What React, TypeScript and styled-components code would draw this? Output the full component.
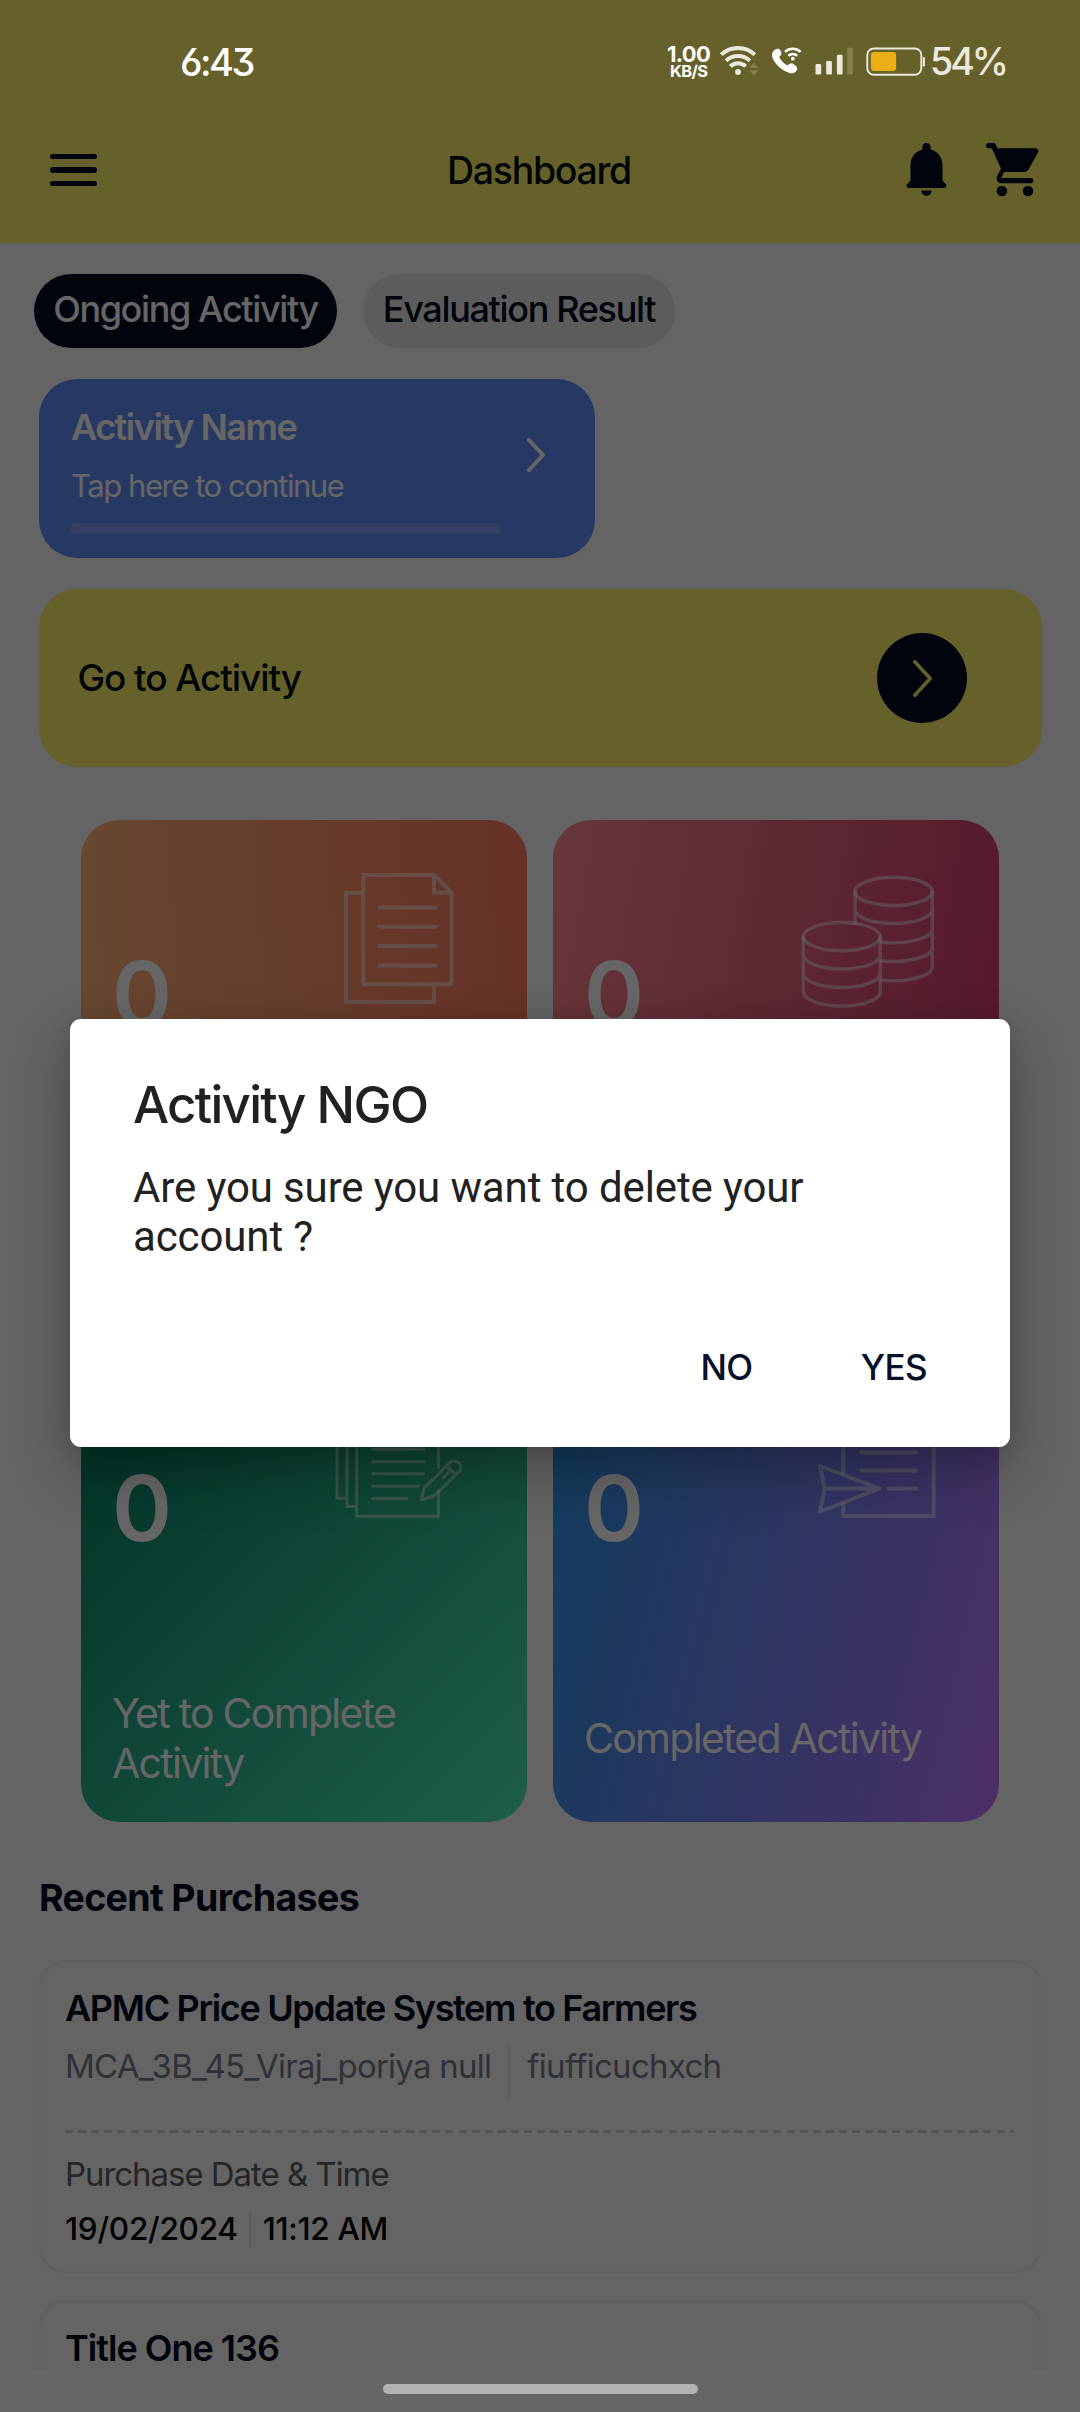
import React from 'react';
import styled, { createGlobalStyle } from 'styled-components';

const GlobalStyle = createGlobalStyle`
  *, *::before, *::after { box-sizing: border-box; }
  html, body { margin: 0; padding: 0; }
  body { font-family: Inter, "Liberation Sans", sans-serif; background: #666; }
`;

const Screen = styled.div`
  position: relative;
  width: 1080px;
  height: 2412px;
  overflow: hidden;
  display: flex;
  flex-direction: column;
  background: #fafafa;
`;

type TextProps = { $size: number; $line: number; $track?: number; $weight?: number; $color?: string };
const Text = styled.span<TextProps>`
  font-size: ${(p) => p.$size}px;
  line-height: ${(p) => p.$line}px;
  letter-spacing: ${(p) => p.$track ?? 0}px;
  font-weight: ${(p) => p.$weight ?? 400};
  color: ${(p) => p.$color ?? '#fff'};
  white-space: nowrap;
`;

/* ---------- app bar ---------- */

const AppBar = styled.header`
  flex: none;
  height: 243px;
  padding: 97px 41px 0 50px;
  display: grid;
  grid-template-columns: 190px 1fr 190px;
  align-items: center;
  background: #fff26b;
`;

const MenuButton = styled.div`
  width: 47px;
  display: flex;
  flex-direction: column;
  gap: 8px;
`;

const MenuLine = styled.i`
  height: 5.3px;
  border-radius: 3px;
  background: #020a20;
`;

const BarTitle = styled.div`
  display: flex;
  justify-content: center;
  padding: 2px 11px 0 0;
`;

const BarActions = styled.div`
  display: flex;
  justify-content: flex-end;
  gap: 39px;
`;

/* ---------- tabs ---------- */

const Tabs = styled.nav`
  flex: none;
  display: flex;
  gap: 26px;
  padding: 31px 34px 0;
`;

const Tab = styled.div<{ $active?: boolean; $width: number }>`
  width: ${(p) => p.$width}px;
  height: 74px;
  padding-bottom: 4px;
  border-radius: 37px;
  display: flex;
  align-items: center;
  justify-content: center;
  background: ${(p) => (p.$active ? '#020a20' : '#e6e6e6')};
`;

/* ---------- activity cards ---------- */

const ActivityCard = styled.section`
  flex: none;
  width: 556px;
  height: 179px;
  margin: 31px 0 0 39px;
  padding: 24px 50px 0 32px;
  border-radius: 38px;
  display: flex;
  justify-content: space-between;
  background: #5f8ff7;
`;

const ActivityText = styled.div`
  width: 430px;
  display: flex;
  flex-direction: column;
`;

const ProgressTrack = styled.div`
  height: 11px;
  margin-top: 2px;
  border-radius: 5px;
  background: #82a0f7;
`;

const ChevronSlot = styled.div`
  padding-top: 35px;
  line-height: 0;
`;

const GoCard = styled.section`
  flex: none;
  width: 1003px;
  height: 178px;
  margin: 31px 0 0 39px;
  padding: 0 75px 0 38.5px;
  border-radius: 38px;
  display: flex;
  align-items: center;
  justify-content: space-between;
  background: #fff26b;
`;

const GoButton = styled.div`
  width: 90px;
  height: 90px;
  border-radius: 50%;
  display: flex;
  align-items: center;
  justify-content: center;
  background: #020a20;
`;

/* ---------- stat tiles ---------- */

const Tiles = styled.section`
  flex: none;
  margin: 53px 81px 0;
  display: grid;
  grid-template-columns: 446px 446px;
  grid-auto-rows: 488px;
  gap: 26px;
`;

const Tile = styled.article<{ $fill: string }>`
  border-radius: 38px;
  background: ${(p) => p.$fill};
`;

const TileHead = styled.div`
  height: 320px;
  padding: 50px 60px 0 31px;
  display: flex;
  justify-content: space-between;
`;

const TileCount = styled.div`
  padding-top: 74px;
`;

const TileLabel = styled.div`
  height: 168px;
  padding-left: 31px;
  display: flex;
  flex-direction: column;
  justify-content: center;
`;

const TileIcon = styled.svg<{ $stroke: number }>`
  width: 140px;
  height: 140px;
  fill: none;
  stroke: rgba(255, 255, 255, 0.48);
  stroke-width: ${(p) => p.$stroke};
  stroke-linecap: round;
  stroke-linejoin: round;
`;

/* ---------- purchases ---------- */

const SectionTitle = styled.h2`
  flex: none;
  margin: 50px 0 0 39px;
  height: 52px;
  display: flex;
`;

const Purchase = styled.article<{ $height: number; $gap: number }>`
  flex: none;
  width: 1003px;
  height: ${(p) => p.$height}px;
  margin: ${(p) => p.$gap}px 0 0 38.5px;
  padding: 21px 24px 0 23.5px;
  border: 3px solid #f1f1f1;
  border-radius: 26px;
  display: flex;
  flex-direction: column;
`;

const SplitRow = styled.div<{ $top: number; $gap: number; $height: number; $center?: boolean }>`
  display: flex;
  align-items: ${(p) => (p.$center ? 'center' : 'flex-start')};
  height: ${(p) => p.$height}px;
  margin-top: ${(p) => p.$top}px;
  gap: ${(p) => p.$gap}px;
`;

const Rule = styled.i`
  width: 2px;
  align-self: stretch;
  background: #e9e9e9;
`;

const Dashes = styled.div`
  height: 3px;
  margin-top: 32px;
  width: 949px;
  flex: none;
  background: repeating-linear-gradient(90deg, #d2d2d2 0 8px, transparent 8px 13.12px);
`;

/* ---------- system layers ---------- */

const NavBar = styled.footer`
  position: absolute;
  inset: auto 0 0 0;
  height: 42px;
  z-index: 4;
  padding-top: 14px;
  display: flex;
  justify-content: center;
  background: #666;
`;

const HomePill = styled.div`
  width: 315px;
  height: 10px;
  border-radius: 5px;
  background: #b3b3b3;
`;

const Scrim = styled.div`
  position: absolute;
  inset: 0;
  z-index: 2;
  padding-top: 1019px;
  background: rgba(0, 0, 0, 0.6);
`;

const StatusBar = styled.div`
  position: absolute;
  inset: 0 0 auto 0;
  height: 124px;
  z-index: 3;
  padding: 0 74px 0 180px;
  display: flex;
  align-items: center;
  justify-content: space-between;
  font-feature-settings: "cv09" 1, "cv03" 1;
`;

const StatusIcons = styled.div`
  display: flex;
  align-items: center;
`;

const Speed = styled.div`
  width: 47px;
  padding-top: 1px;
  display: flex;
  flex-direction: column;
  align-items: flex-start;
`;

const SpeedUnit = styled.div`
  display: flex;
  padding-left: 3px;
`;

/* ---------- dialog ---------- */

const Dialog = styled.div`
  width: 940px;
  height: 428px;
  margin: 0 auto;
  padding: 51px 83px 0 63px;
  border-radius: 11px;
  display: flex;
  flex-direction: column;
  background: #fff;
  box-shadow: 0 24px 56px rgba(0, 0, 0, 0.27), 0 2px 22px rgba(0, 0, 0, 0.1);
`;

const DialogTitle = styled.div`
  height: 70px;
`;

const Message = styled.p`
  margin: 23px 0 0;
  font-family: Roboto, sans-serif;
  font-size: 42px;
  line-height: 49.3px;
  letter-spacing: -0.12px;
  color: #212121;
`;

const DialogActions = styled.div`
  margin-top: 82px;
  display: flex;
  justify-content: flex-end;
  gap: 108px;
`;

const INK = '#020a20';

const Chevron = ({ w, h, color, stroke }: { w: number; h: number; color: string; stroke: number }) => (
  <svg width={w} height={h} viewBox={`0 0 ${w} ${h}`} fill="none" stroke={color} strokeWidth={stroke} strokeLinecap="round" strokeLinejoin="round">
    <path d={`M${stroke / 2} ${stroke / 2} L${w - stroke / 2} ${h / 2} L${stroke / 2} ${h - stroke / 2}`} />
  </svg>
);

const Bell = () => (
  <svg width="41" height="53" viewBox="0 0 41 53" fill={INK}>
    <path d="M20.5 0a4.2 4.2 0 0 1 4.2 4.2v2.2C32 8.3 36.5 14.6 36.5 22v15.5l3.2 3.4c1.6 1.7.5 4-1.7 4H3c-2.2 0-3.3-2.3-1.7-4l3.2-3.4V22c0-7.4 4.5-13.7 11.8-15.6V4.2A4.2 4.2 0 0 1 20.5 0z" />
    <path d="M15.3 47.5h10.400a5.200 5.200 0 0 1-10.400 0z" />
  </svg>
);

const Cart = () => (
  <svg width="53" height="54" viewBox="0 0 53 54" fill={INK}>
    <path d="M2.600 0H7.200c1.300 0 2.200.6 2.700 1.700L11.500 5.200H49.500c2.300 0 3.500 2.200 2.500 4.200L42.700 26.300c-.9 1.700-2.500 2.700-4.500 2.700H18.200l-2.700 5.200c-.2.400 0 .7.400.7H44.700a2.650 2.650 0 0 1 0 5.300H15.600c-4 0-6-4.100-4.400-7.500l3.800-7L5.800 5.200H2.600a2.600 2.600 0 0 1 0-5.200z" />
    <circle cx="15.9" cy="48" r="5.3" />
    <circle cx="42" cy="48" r="5.3" />
  </svg>
);

const SystemIcons = () => (
  <svg width="216" height="36" viewBox="712 44 216 36" fill="none">
    <g stroke="#ebe9dc" strokeWidth="4">
      <path d="M719.2 54.600a24.500 24.500 0 0 1 33.600 0" />
      <path d="M724.100 60.700a17.500 17.500 0 0 1 23.800 0" />
      <path d="M728.400 66.300a10.700 10.700 0 0 1 15.200 0" />
    </g>
    <circle cx="736" cy="72" r="2.900" fill="#ebe9dc" />
    <path d="M747.500 68l4.500-5.500 4.500 5.500zM747.500 70.200l4.500 5.300 4.500-5.300z" fill="#857f4b" />
    <path d="M772 50.400c-2.100 1.700-2.600 4.600-1.300 8 3.500 7 9.600 12.200 17.100 14.600 3 .7 5.700-.2 7-2.700.8-1.600.5-3.100-.9-4.300l-2.300-1.900c-1.400-1.100-2.800-1.200-4.200-.2l-2.200 1.600c-3.500-2-6.200-4.800-8-8.400l1.400-1.600c1-1.200 1.100-2.500.4-3.900l-.9-1.500c-1.400-2.300-4.400-1.300-6.100.3z" fill="#fff" />
    <g stroke="#fff" strokeWidth="2.500">
      <path d="M783 51.800a11.300 11.300 0 0 1 15.600 0" />
      <path d="M786.400 55.800a6.600 6.600 0 0 1 8.800 0" />
    </g>
    <circle cx="790.800" cy="58.700" r="1.900" fill="#fff" />
    <g fill="#ebe9dc">
      <rect x="813.500" y="64" width="5.700" height="10.500" rx="1.200" />
      <rect x="824.200" y="61" width="5.700" height="13.500" rx="1.200" />
      <rect x="834.900" y="54.700" width="5.700" height="19.800" rx="1.200" />
      <rect x="845.200" y="47.700" width="5.700" height="26.800" rx="1.200" fill="#857f4b" />
      <rect x="920.800" y="57" width="2.200" height="9.500" rx="1" />
    </g>
    <rect x="865.300" y="48.500" width="54" height="26.300" rx="6.500" stroke="#ebe9dc" strokeWidth="1.900" />
    <rect x="868.900" y="52" width="25.200" height="19" rx="3" fill="#ebae14" />
  </svg>
);

const CopiesIcon = () => (
  <TileIcon viewBox="327 870 140 140" $stroke={4}>
    <path d="M363.300 892.700H346V1002h88v-18M363.300 875H434l17.500 17.700V984.300H363.300zM434 875v17.700h17.500M379.500 907.400h56M379.500 926.700h56M379.500 946.100h56M379.500 965.500h56" />
  </TileIcon>
);

const CoinsIcon = () => (
  <TileIcon viewBox="799 870 140 140" $stroke={3.5}>
    <ellipse cx="893.600" cy="891.400" rx="38.700" ry="14.200" />
    <ellipse cx="841.700" cy="936.600" rx="38.500" ry="14.200" />
    <path d="M855 892v31.500M932.300 892V966.500M855 910a38.700 14.200 0 0 0 77.300 0M881 942a38.700 14.200 0 0 0 51.300-13.500M881 960.700a38.700 14.200 0 0 0 51.300-13.500M881 980a38.700 14.200 0 0 0 51.300-13.500" />
    <path d="M803.300 937V992.500M880.200 937V992.500M803.300 955.500a38.500 14.200 0 0 0 76.900 0M803.300 974a38.500 14.200 0 0 0 76.900 0M803.300 992.500a38.500 14.200 0 0 0 76.900 0" />
  </TileIcon>
);

const DraftsIcon = () => (
  <TileIcon viewBox="327 1384 140 140" $stroke={3}>
    <path d="M337 1400V1498.300h10M347 1392V1506.600h9.500M438.500 1467.500V1386H356.700V1516.300H438.500V1491M372.500 1449.300h51M372.500 1461.700h51M372.500 1473.700h51M372.500 1486.200h45.500M372.500 1498.700h34.500" />
    <path d="M421.300 1499.700l2.700-11.400L450.300 1462.300a6.400 6.400 0 0 1 9 9L433.500 1496.300zM447.200 1466.300l8 8M450 1471l-7 7" />
  </TileIcon>
);

const SentIcon = () => (
  <TileIcon viewBox="799 1384 140 140" $stroke={4}>
    <path d="M843.300 1473V1386H933.700V1516H843.300V1504M861 1452.500h55M861 1470.500h55M888.300 1488.500h27.700" />
    <path d="M820 1466l59.500 22.500L820 1511.500l4.500-23zM824.500 1488.500h55" />
  </TileIcon>
);

const tiles = [
  { fill: 'linear-gradient(86deg, #ffb67a, #ff7a62)', icon: <CopiesIcon />, label: [] as string[] },
  { fill: 'linear-gradient(100deg, #ff8a92, #d0386a)', icon: <CoinsIcon />, label: [] as string[] },
  { fill: 'linear-gradient(135deg, #00745a, #4eebbb)', icon: <DraftsIcon />, label: ['Yet to Complete', 'Activity'] },
  { fill: 'linear-gradient(104deg, #2896e6, #bd74ff)', icon: <SentIcon />, label: ['Completed Activity'] },
];

export default function App() {
  return (
    <Screen>
      <GlobalStyle />
      <AppBar>
        <MenuButton><MenuLine /><MenuLine /><MenuLine /></MenuButton>
        <BarTitle><Text $size={37.5} $line={50} $track={-1.3} $weight={450} $color="#061010">Dashboard</Text></BarTitle>
        <BarActions><Bell /><Cart /></BarActions>
      </AppBar>

      <Tabs>
        <Tab $active $width={303}><Text $size={36} $line={50} $track={-1.38} $weight={500}>Ongoing Activity</Text></Tab>
        <Tab $width={312}><Text $size={36} $line={50} $track={-1.33} $weight={500} $color={INK}>Evaluation Result</Text></Tab>
      </Tabs>

      <ActivityCard>
        <ActivityText>
          <Text $size={36} $line={48} $track={-1.5} $weight={600}>Activity Name</Text>
          <Text $size={31} $line={70} $track={-1.45}>Tap here to continue</Text>
          <ProgressTrack />
        </ActivityText>
        <ChevronSlot><Chevron w={18} h={34} color="#fff" stroke={4} /></ChevronSlot>
      </ActivityCard>

      <GoCard>
        <Text $size={37} $line={50} $track={-1.1} $weight={500} $color="#061010">Go to Activity</Text>
        <GoButton><Chevron w={19} h={37} color="#fff26b" stroke={3.5} /></GoButton>
      </GoCard>

      <Tiles>
        {tiles.map((tile, index) => (
          <Tile key={index} $fill={tile.fill}>
            <TileHead>
              <TileCount><Text $size={91} $line={100} $weight={600}>0</Text></TileCount>
              {tile.icon}
            </TileHead>
            <TileLabel>
              {tile.label.map((line) => (
                <Text key={line} $size={41} $line={50} $track={-1.72}>{line}</Text>
              ))}
            </TileLabel>
          </Tile>
        ))}
      </Tiles>

      <SectionTitle><Text $size={37.5} $line={52} $track={-0.65} $weight={680} $color={INK}>Recent Purchases</Text></SectionTitle>

      <Purchase $height={313} $gap={36}>
        <Text $size={36} $line={48} $track={-1.33} $weight={600} $color={INK}>APMC Price Update System to Farmers</Text>
        <SplitRow $top={14} $gap={17} $height={52}>
          <Text $size={33} $line={41} $track={-0.75} $color="#787c87">MCA_3B_45_Viraj_poriya null</Text>
          <Rule />
          <Text $size={33} $line={41} $track={-0.7} $color="#787c87">fiufficuchxch</Text>
        </SplitRow>
        <Dashes />
        <SplitRow $top={19} $gap={0} $height={44}>
          <Text $size={33} $line={44} $track={-1.05} $color="#606060">Purchase Date &amp; Time</Text>
        </SplitRow>
        <SplitRow $top={14} $gap={11.5} $height={38} $center>
          <Text $size={31.5} $line={38} $track={-0.25} $weight={450} $color="#000">19/02/2024</Text>
          <Rule />
          <Text $size={31.5} $line={38} $track={-0.3} $weight={450} $color="#000">11:12 AM</Text>
        </SplitRow>
      </Purchase>

      <Purchase $height={313} $gap={27}>
        <Text $size={36} $line={48} $track={-1} $weight={600} $color={INK}>Title One 136</Text>
      </Purchase>

      <Scrim>
        <Dialog>
          <DialogTitle><Text $size={51} $line={70} $track={-1.7} $weight={500} $color="#212121">Activity NGO</Text></DialogTitle>
          <Message>Are you sure you want to delete your account ?</Message>
          <DialogActions>
            <Text $size={35} $line={46} $track={-0.5} $weight={450} $color="#061128">NO</Text>
            <Text $size={35} $line={46} $track={-0.6} $weight={450} $color="#061128">YES</Text>
          </DialogActions>
        </Dialog>
      </Scrim>

      <StatusBar>
        <Text $size={38} $line={50} $weight={500} $track={-2.5}>6:43</Text>
        <StatusIcons>
          <Speed>
            <Text $size={22} $line={17} $weight={650} $track={-0.7}>1.00</Text>
            <SpeedUnit><Text $size={16.5} $line={17} $weight={700} $track={-0.6}>KB/S</Text></SpeedUnit>
          </Speed>
          <SystemIcons />
          <Text $size={37.5} $line={50} $weight={450} $track={-3} $color="#ebe9dc">54%</Text>
        </StatusIcons>
      </StatusBar>

      <NavBar><HomePill /></NavBar>
    </Screen>
  );
}
